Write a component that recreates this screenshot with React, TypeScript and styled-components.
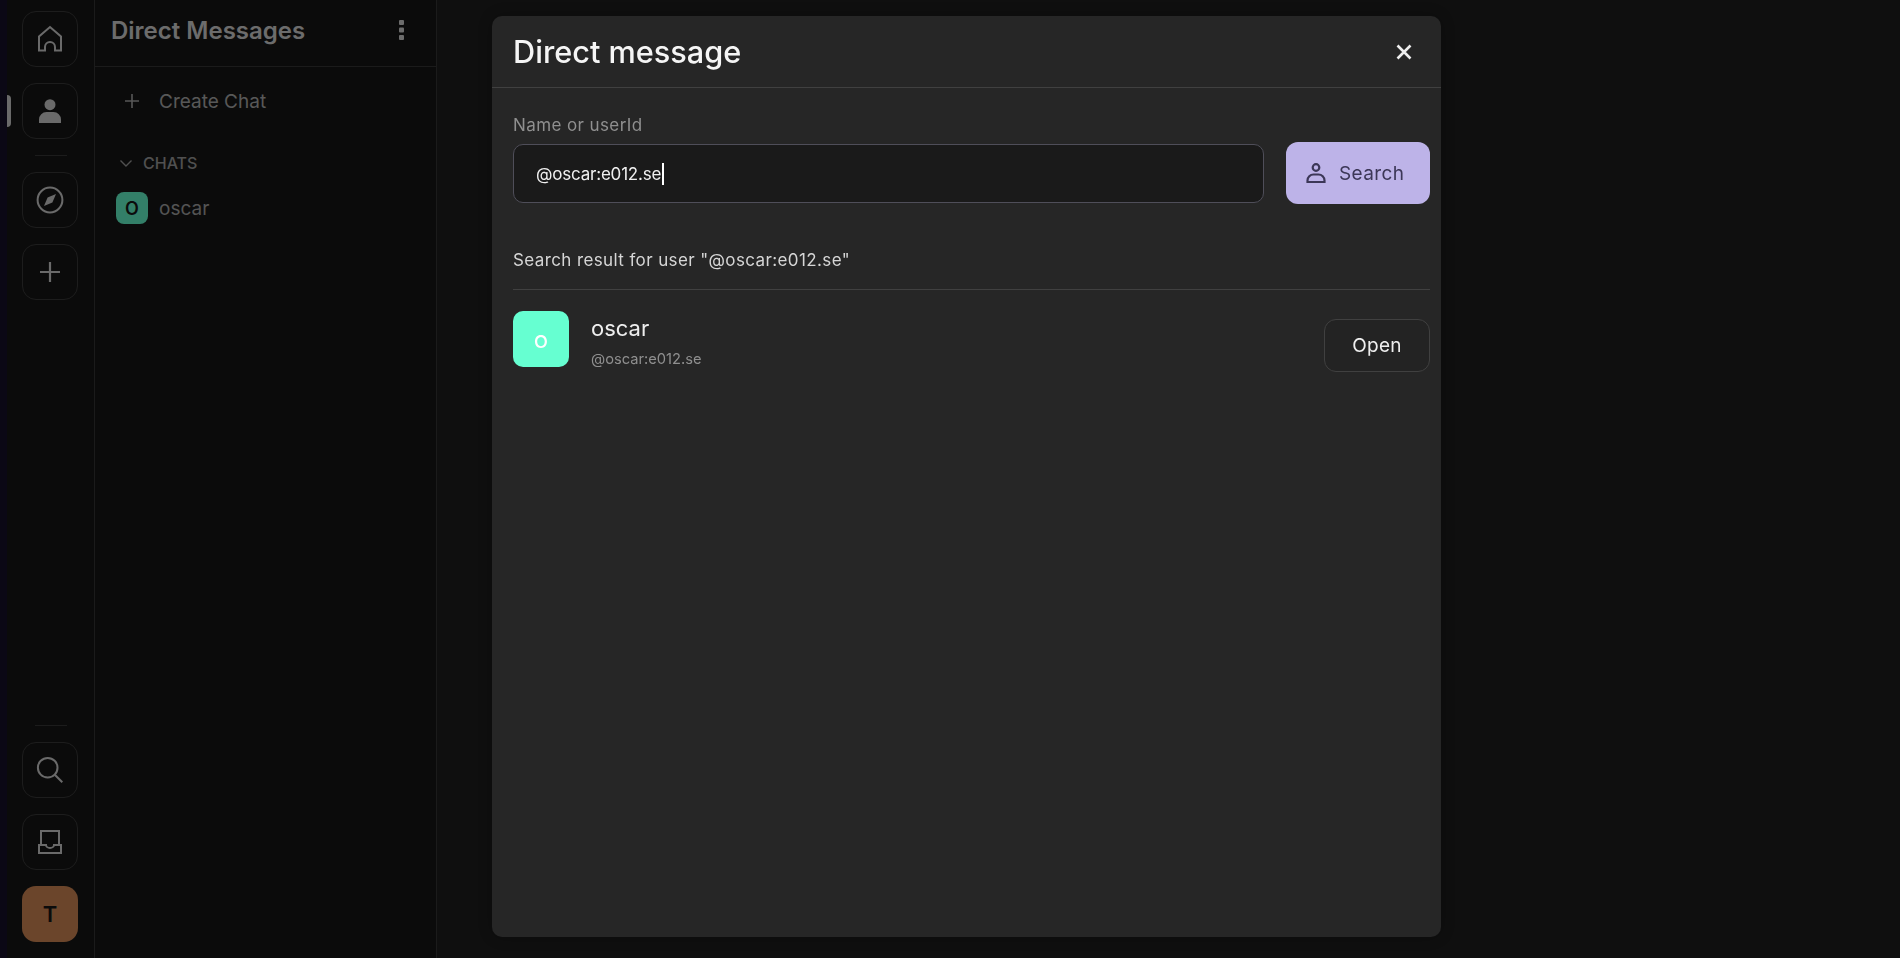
import React from "react";
import styled, { createGlobalStyle } from "styled-components";

const GlobalStyle = createGlobalStyle`
  html, body, #root {
    margin: 0;
    height: 100%;
  }
  body {
    background: #1e1e1e;
    font-family: "Inter", "Liberation Sans", sans-serif;
    overflow: hidden;
  }
  * {
    box-sizing: border-box;
  }
`;

const Page = styled.div`
  display: flex;
  height: 958px;
`;
const EdgeStrip = styled.div`
  width: 7px;
  background: #16102a;
`;
const Nav = styled.nav`
  width: 88px;
  padding: 11px 15px 16px;
  background: #171717;
  border-right: 1px solid #363636;
  display: flex;
  flex-direction: column;
  justify-content: space-between;
`;
const NavGroup = styled.div`
  display: flex;
  flex-direction: column;
  gap: 16px;
`;
const NavDivider = styled.div`
  width: 32px;
  height: 1px;
  margin: 0 auto;
  background: #383838;
`;
const Tile = styled.button`
  position: relative;
  width: 56px;
  height: 56px;
  padding: 0;
  display: flex;
  align-items: center;
  justify-content: center;
  background: transparent;
  border: 1px solid #3a3a3a;
  border-radius: 14px;
  color: #d4d4d4;
`;
const ActivePill = styled.span`
  position: absolute;
  left: -16px;
  top: 11px;
  width: 4px;
  height: 32px;
  background: #d4d4d4;
  border-radius: 0 4px 4px 0;
`;
const AvatarTile = styled(Tile)`
  background: #d68a56;
  border: none;
  color: #171717;
  font: 600 22px "Inter", sans-serif;
`;
const SidePanel = styled.aside`
  width: 342px;
  background: #171717;
  border-right: 1px solid #363636;
`;
const PanelHeader = styled.header`
  height: 67px;
  padding: 0 32px 6px 16px;
  display: flex;
  align-items: center;
  justify-content: space-between;
  border-bottom: 1px solid #363636;
`;
const PanelTitle = styled.h1`
  margin: 0;
  font-size: 24px;
  font-weight: 600;
  color: #d8d8d8;
`;
const CreateRow = styled.div`
  margin-top: 14px;
  padding-left: 30px;
  height: 40px;
  display: flex;
  align-items: center;
  gap: 20px;
  font-size: 19px;
  color: #b0b0b0;
`;
const SectionRow = styled.div`
  margin-top: 32px;
  padding-left: 25px;
  height: 20px;
  display: flex;
  align-items: center;
  gap: 11px;
  font-size: 16px;
  font-weight: 500;
  color: #a0a0a0;
`;
const ChatRow = styled.div`
  margin-top: 19px;
  padding-left: 21px;
  display: flex;
  align-items: center;
  gap: 11px;
  font-size: 19px;
  color: #a8a8a8;
`;
const ChatAvatar = styled.span`
  width: 32px;
  height: 32px;
  display: flex;
  align-items: center;
  justify-content: center;
  background: #66ffd1;
  border-radius: 8px;
  color: #171717;
  font-size: 18px;
  font-weight: 600;
`;

const Overlay = styled.div`
  position: fixed;
  inset: 0;
  padding: 16px 0 21px 492px;
  background: rgba(0, 0, 0, 0.5);
`;
const Dialog = styled.section`
  width: 949px;
  height: 100%;
  background: #262626;
  border-radius: 10px;
  box-shadow: 0 0 16px rgba(0, 0, 0, 0.25);
`;
const DialogHeader = styled.header`
  height: 72px;
  padding: 0 29px 0 21px;
  display: flex;
  align-items: center;
  justify-content: space-between;
  border-bottom: 1px solid #404040;
`;
const DialogTitle = styled.h2`
  margin: 0 0 1px;
  font-size: 30.7px;
  font-weight: 500;
  color: #f5f5f5;
`;
const CloseButton = styled.button`
  padding: 0;
  display: flex;
  background: none;
  border: none;
  color: #eeeeee;
`;
const DialogBody = styled.div`
  padding: 25px 11px 0 21px;
`;
const FieldLabel = styled.label`
  display: block;
  font-size: 17px;
  letter-spacing: 0.4px;
  line-height: 24px;
  color: #8f8f8f;
`;
const SearchRow = styled.div`
  margin-top: 5px;
  display: flex;
  align-items: center;
  gap: 22px;
`;
const FakeInput = styled.div`
  flex: 1;
  height: 59px;
  padding: 1px 0 0 22px;
  display: flex;
  align-items: center;
  background: #1a1a1a;
  border: 1.5px solid #4f4e59;
  border-radius: 10px;
  font-size: 17px;
  letter-spacing: -0.2px;
  color: #f0f0f0;
`;
const Caret = styled.span`
  width: 2px;
  height: 22px;
  margin-left: 1px;
  background: #ffffff;
`;
const SearchButton = styled.button`
  width: 144px;
  height: 62px;
  padding: 0 0 0 20px;
  display: flex;
  align-items: center;
  gap: 13px;
  background: #bdb3e8;
  border: none;
  border-radius: 12px;
  color: #3c3757;
  font: 400 19px "Inter", sans-serif;
  letter-spacing: 0.4px;
`;
const ResultHeading = styled.p`
  margin: 44px 0 0;
  font-size: 17px;
  letter-spacing: 0.39px;
  line-height: 24px;
  color: #d6d6d6;
`;
const Divider = styled.hr`
  margin: 17px 0 0;
  border: none;
  border-top: 1px solid #404040;
`;
const ResultRow = styled.div`
  margin-top: 21px;
  display: flex;
  align-items: flex-start;
  gap: 22px;
`;
const ResultAvatar = styled.span`
  width: 56px;
  height: 56px;
  display: flex;
  align-items: center;
  justify-content: center;
  background: #66ffd1;
  border-radius: 10px;
  color: #ffffff;
  font-size: 24px;
`;
const ResultInfo = styled.div`
  flex: 1;
  padding-top: 3px;
`;
const ResultName = styled.div`
  font-size: 22px;
  line-height: 28px;
  color: #eeeeee;
`;
const ResultId = styled.div`
  margin-top: 7px;
  font-size: 14.7px;
  line-height: 20px;
  color: #8f8f8f;
`;
const OpenButton = styled.button`
  width: 106px;
  height: 53px;
  margin-top: 8px;
  background: #232323;
  border: 1px solid #404040;
  border-radius: 12px;
  color: #eeeeee;
  font: 400 19px "Inter", sans-serif;
  letter-spacing: 0.3px;
`;

const Glyph = ({ children, size = 28 }: { children: React.ReactNode; size?: number }) => (
  <svg width={size} height={size} viewBox={`0 0 ${size} ${size}`} fill="none" stroke="currentColor" strokeWidth={2}>
    {children}
  </svg>
);

export default function App() {
  return (
    <>
      <GlobalStyle />
      <Page>
        <EdgeStrip />
        <Nav>
          <NavGroup>
            <Tile>
              <Glyph>
                <path d="M3 25.5V11.5L14 2l11 9.5v14h-6V22a5 5 0 0 0-10 0v3.5z" />
              </Glyph>
            </Tile>
            <Tile>
              <ActivePill />
              <Glyph>
                <circle cx="14" cy="7.7" r="5.5" fill="currentColor" stroke="none" />
                <path d="M3 26v-3.5A7.5 7.5 0 0 1 10.5 15h7a7.5 7.5 0 0 1 7.5 7.5V26z" fill="currentColor" stroke="none" />
              </Glyph>
            </Tile>
            <NavDivider />
            <Tile>
              <Glyph>
                <circle cx="14" cy="14" r="12.4" />
                <path d="M20 8l-3.6 8.4L8 20l3.6-8.4z" fill="currentColor" stroke="none" />
              </Glyph>
            </Tile>
            <Tile>
              <Glyph>
                <path d="M4 14h20M14 4v20" strokeWidth={2.2} />
              </Glyph>
            </Tile>
          </NavGroup>
          <NavGroup>
            <NavDivider />
            <Tile>
              <Glyph>
                <circle cx="11.7" cy="11.7" r="9.8" />
                <path d="M18.8 18.8l7.5 7.5" />
              </Glyph>
            </Tile>
            <Tile>
              <Glyph>
                <path d="M5 17V3h18v14" />
                <path d="M3 17h7c0 1.500 1.800 3 4 3s4-1.500 4-3h7v8H3z" />
              </Glyph>
            </Tile>
            <AvatarTile>T</AvatarTile>
          </NavGroup>
        </Nav>
        <SidePanel>
          <PanelHeader>
            <PanelTitle>Direct Messages</PanelTitle>
            <svg width="5" height="20" viewBox="0 0 5 20" fill="#d8d8d8">
              <rect width="5" height="5" rx="1" />
              <rect y="7.500" width="5" height="5" rx="1" />
              <rect y="15" width="5" height="5" rx="1" />
            </svg>
          </PanelHeader>
          <CreateRow>
            <svg width="14" height="14" viewBox="0 0 14 14" fill="none" stroke="currentColor" strokeWidth={1.6}>
              <path d="M0 7h14M7 0v14" />
            </svg>
            Create Chat
          </CreateRow>
          <SectionRow>
            <svg width="12" height="7" viewBox="0 0 12 7" fill="none" stroke="currentColor" strokeWidth={1.4}>
              <path d="M.5.500L6 6 11.500.500" />
            </svg>
            CHATS
          </SectionRow>
          <ChatRow>
            <ChatAvatar>O</ChatAvatar>
            oscar
          </ChatRow>
        </SidePanel>
      </Page>
      <Overlay>
        <Dialog>
          <DialogHeader>
            <DialogTitle>Direct message</DialogTitle>
            <CloseButton>
              <svg width="16" height="16" viewBox="0 0 16 16" fill="none" stroke="currentColor" strokeWidth={2.6}>
                <path d="M1.500 1.500l13 13M14.500 1.500l-13 13" />
              </svg>
            </CloseButton>
          </DialogHeader>
          <DialogBody>
            <FieldLabel>Name or userId</FieldLabel>
            <SearchRow>
              <FakeInput>
                @oscar:e012.se
                <Caret />
              </FakeInput>
              <SearchButton>
                <svg width="20" height="20" viewBox="0 0 20 20" fill="none" stroke="currentColor" strokeWidth={2.2}>
                  <circle cx="10" cy="4.500" r="3.300" />
                  <path d="M1.500 19v-1.500a6 6 0 0 1 6-6h5a6 6 0 0 1 6 6V19z" />
                </svg>
                Search
              </SearchButton>
            </SearchRow>
            <ResultHeading>Search result for user "@oscar:e012.se"</ResultHeading>
            <Divider />
            <ResultRow>
              <ResultAvatar>o</ResultAvatar>
              <ResultInfo>
                <ResultName>oscar</ResultName>
                <ResultId>@oscar:e012.se</ResultId>
              </ResultInfo>
              <OpenButton>Open</OpenButton>
            </ResultRow>
          </DialogBody>
        </Dialog>
      </Overlay>
    </>
  );
}
